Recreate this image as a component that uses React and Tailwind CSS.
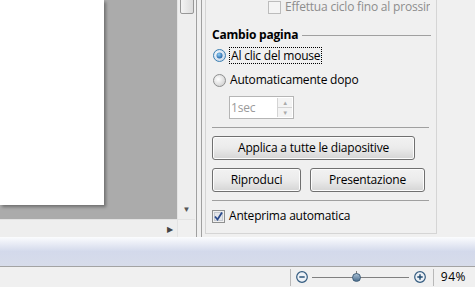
import React from 'react';

const font = { fontFamily: '"Open Sans", "Noto Sans", sans-serif' };

const Btn = ({ children, className = '' }) => (
  <div
    className={`h-[24px] flex items-center justify-center rounded-[3px] border border-[#707070] bg-gradient-to-b from-[#f2f2f2] via-[#ebebeb] to-[#d5d5d5] text-[12px] text-black shadow-[inset_0_0_0_1px_#fcfcfc] ${className}`}
  >
    {children}
  </div>
);

const Radio = ({ checked }) => (
  <svg width="13" height="13" viewBox="0 0 13 13" className="shrink-0">
    <defs>
      <radialGradient id={checked ? 'rg1' : 'rg0'} cx="0.4" cy="0.4" r="0.6">
        <stop offset="0" stopColor="#ffffff" />
        <stop offset="1" stopColor={checked ? '#c9d9ea' : '#d4d4d4'} />
      </radialGradient>
      <radialGradient id="dot" cx="0.4" cy="0.35" r="0.7">
        <stop offset="0" stopColor="#8fd0f7" />
        <stop offset="1" stopColor="#1c5a9e" />
      </radialGradient>
    </defs>
    <circle cx="6.5" cy="6.5" r="6" fill={`url(#${checked ? 'rg1' : 'rg0'})`} stroke={checked ? '#3c7fb1' : '#8e8f8f'} strokeWidth="1" />
    {checked && <circle cx="6.5" cy="6.5" r="3" fill="url(#dot)" />}
  </svg>
);

const Checkbox = ({ checked, disabled }) => (
  <svg width="13" height="13" viewBox="0 0 13 13" className="shrink-0">
    <rect x="0.5" y="0.5" width="12" height="12" fill={disabled ? '#f4f4f4' : '#f0f0f0'} stroke={disabled ? '#bcbcbc' : '#8e8f8f'} />
    {!disabled && <rect x="2.5" y="2.5" width="8" height="8" fill="#e4e6ea" stroke="#c5c9d0" />}
    {checked && <path d="M3 6.5 L5.5 9.5 L10 2.5" fill="none" stroke="#2a4a8c" strokeWidth="1.8" />}
  </svg>
);

export default function App() {
  return (
    <div className="w-[475px] h-[287px] overflow-hidden flex flex-col bg-[#f0f0f0]" style={font}>
      <div className="h-[237px] flex shrink-0">
        {/* document view */}
        <div className="w-[195px] flex flex-col shrink-0">
          <div className="h-[219px] flex">
            <div className="w-[177px] bg-[#ababab] overflow-hidden">
              <div className="w-[104px] h-[205px] bg-white shadow-[2px_2px_3px_rgba(0,0,0,0.35)]" />
            </div>
            <div className="w-[18px] bg-[#eeeeee] border-l border-[#e3e3e3] flex flex-col justify-between items-center">
              <div className="w-[14px] h-[15px] -mt-[1px] rounded-b-[2px] border border-[#979797] bg-gradient-to-r from-[#f3f3f3] to-[#dcdcdc]" />
              <div className="text-[#555] text-[8px] leading-none mb-[6px]">▼</div>
            </div>
          </div>
          <div className="h-[18px] flex border-t border-[#e3e3e3]">
            <div className="w-[177px] bg-[#eeeeee] flex items-center justify-end pr-[4px]">
              <span className="text-[#444] text-[8px] leading-none">▶</span>
            </div>
            <div className="w-[18px] bg-[#f0f0f0] border-l border-[#e3e3e3]" />
          </div>
        </div>
        {/* splitter */}
        <div className="w-[8px] flex shrink-0">
          <div className="w-[1px] ml-[1px] bg-[#a0a0a0]" />
          <div className="w-[4px] bg-[#f0f0f0]" />
          <div className="w-[1px] bg-[#a0a0a0]" />
        </div>
        {/* task panel */}
        <div className="flex-1 pl-[2px] pb-[3px] flex">
          <div className="w-[232px] border-l border-r border-b border-[#d5d5d5] bg-[#f0f0f0] pl-[6px] pr-[6px] flex flex-col text-[12px] tracking-[-0.2px] text-black overflow-hidden">
            <div className="h-[14px] flex items-center pl-[56px] gap-[4px] whitespace-nowrap overflow-hidden">
              <Checkbox disabled />
              <span className="text-[#8d8d8d] leading-[14px]">Effettua ciclo fino al prossimo</span>
            </div>
            <div className="mt-[13px] flex items-center gap-[4px]">
              <span className="font-bold leading-[16px]">Cambio pagina</span>
              <div className="flex-1 h-px bg-[#a0a0a0] mr-[-1px]" />
            </div>
            <div className="mt-[2px] flex items-center gap-[3px] h-[20px] pl-[1px]">
              <Radio checked />
              <span className="border border-dotted border-black px-[1px] leading-[15px]">Al clic del mouse</span>
            </div>
            <div className="mt-[5px] flex items-center gap-[4px] h-[20px] pl-[1px]">
              <Radio />
              <span>Automaticamente dopo</span>
            </div>
            <div className="mt-[6px] ml-[17px] w-[65px] h-[23px] border border-[#b5b5b5] bg-white flex">
              <span className="flex-1 pl-[1px] text-[#9a9a9a] leading-[21px]">1sec</span>
              <div className="w-[15px] flex flex-col border-l border-[#d4d4d4] my-[1px] mr-[1px]">
                <div className="flex-1 flex items-center justify-center border-b border-[#d4d4d4] bg-[#f4f4f4] text-[#aaa] text-[6px] leading-none">▲</div>
                <div className="flex-1 flex items-center justify-center bg-[#f4f4f4] text-[#aaa] text-[6px] leading-none">▼</div>
              </div>
            </div>
            <div className="mt-[8px] h-px bg-[#a0a0a0] mr-[1px]" />
            <Btn className="mt-[8px] w-[203px]">Applica a tutte le diapositive</Btn>
            <div className="mt-[8px] flex gap-[9px]">
              <Btn className="w-[89px]">Riproduci</Btn>
              <Btn className="w-[115px]">Presentazione</Btn>
            </div>
            <div className="mt-[8px] h-px bg-[#a0a0a0] mr-[1px]" />
            <div className="mt-[6px] flex items-center gap-[4px]">
              <Checkbox checked />
              <span>Anteprima automatica</span>
            </div>
          </div>
        </div>
      </div>
      {/* toolbar band */}
      <div className="h-[30px] shrink-0 bg-gradient-to-b from-[#fbfcfe] via-[#d3d9eb] to-[#d7dcea] border-b border-[#a3a3a3]" />
      {/* status bar */}
      <div className="flex-1 flex items-center justify-end text-[12px] text-black">
        <div className="w-px h-[17px] bg-[#b8b8b8] mr-[5px]" />
        <svg width="12" height="12" viewBox="0 0 12 12" className="mr-[4px]">
          <circle cx="6" cy="6" r="5.3" fill="#eef2f7" stroke="#345c80" strokeWidth="1.2" />
          <path d="M3.3 6 H8.7" stroke="#1f4a70" strokeWidth="1.4" />
        </svg>
        <div className="relative w-[97px] h-[12px] flex items-center">
          <div className="w-full h-px bg-[#808080]" />
          <div className="absolute left-[44px] top-[0px] w-px h-[3px] bg-[#808080]" />
          <div className="absolute left-[40px] top-[2px] w-[9px] h-[9px] rounded-full bg-gradient-to-b from-[#a9c0d4] to-[#4d7090] border border-[#3e5d78]" />
        </div>
        <svg width="12" height="12" viewBox="0 0 12 12" className="ml-[5px] mr-[7px]">
          <circle cx="6" cy="6" r="5.3" fill="#eef2f7" stroke="#345c80" strokeWidth="1.2" />
          <path d="M3.3 6 H8.7 M6 3.3 V8.7" stroke="#1f4a70" strokeWidth="1.4" />
        </svg>
        <div className="w-px h-[17px] bg-[#b8b8b8] mr-[7px]" />
        <span className="mr-[9px] tracking-[0.5px]">94%</span>
      </div>
    </div>
  );
}
